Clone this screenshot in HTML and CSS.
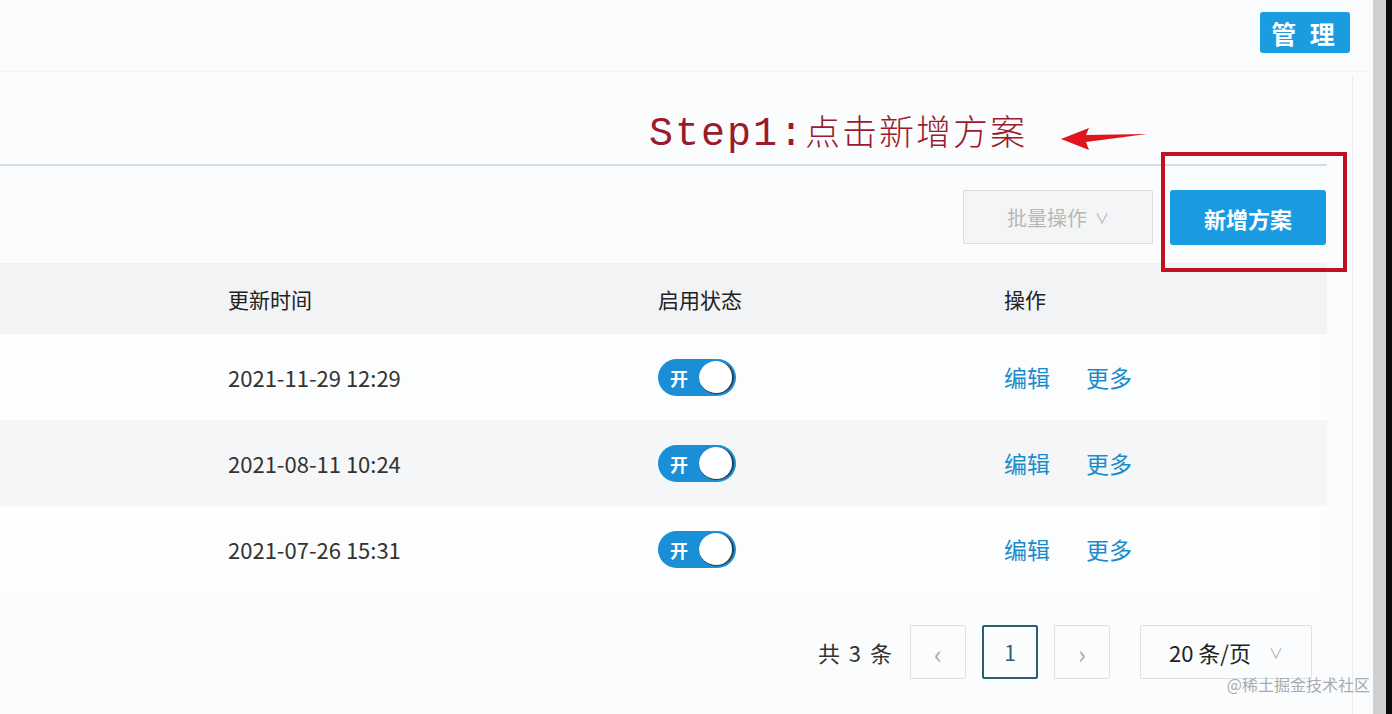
FILE: index.html
```html
<!DOCTYPE html>
<html lang="zh-CN">
<head>
    <meta charset="UTF-8">
    <title>方案列表</title>
    <link rel="stylesheet" href="styles.css">
</head>
<body>
<div class="screen">
    <div class="main">
        <div class="topbar">
            <button class="btn-manage">管 理</button>
        </div>

        <div class="panel">
            <div class="panel-head">
                <span class="step-tip"><span class="step-latin">Step1:</span><span class="step-cn">点击新增方案</span></span>
                <svg class="tip-arrow" width="88" height="26" viewBox="0 0 88 26">
                    <polygon points="0,14 28,3 25,10 86,9 25,17 28,25" fill="#e0141c"/>
                </svg>
            </div>

            <div class="toolbar">
                <div class="batch-select">批量操作 <span class="caret">&#8744;</span></div>
                <button class="btn-add">新增方案</button>
                <div class="highlight-box"></div>
            </div>

            <div class="grid-table">
                <div class="row head">
                    <div></div>
                    <div>更新时间</div>
                    <div>启用状态</div>
                    <div>操作</div>
                </div>
                <div class="row">
                    <div></div>
                    <div>2021-11-29 12:29</div>
                    <div><span class="switch"><span class="switch-text">开</span><span class="knob"></span></span></div>
                    <div class="actions"><a>编辑</a><a>更多</a></div>
                </div>
                <div class="row striped">
                    <div></div>
                    <div>2021-08-11 10:24</div>
                    <div><span class="switch"><span class="switch-text">开</span><span class="knob"></span></span></div>
                    <div class="actions"><a>编辑</a><a>更多</a></div>
                </div>
                <div class="row">
                    <div></div>
                    <div>2021-07-26 15:31</div>
                    <div><span class="switch"><span class="switch-text">开</span><span class="knob"></span></span></div>
                    <div class="actions"><a>编辑</a><a>更多</a></div>
                </div>
            </div>

            <div class="pager">
                <span class="total">共 3 条</span>
                <span class="page-btn arrow">&lsaquo;</span>
                <span class="page-btn current">1</span>
                <span class="page-btn arrow">&rsaquo;</span>
                <div class="size-select">20 条/页 <span class="caret">&#8744;</span></div>
            </div>
        </div>
        <span class="watermark">@稀土掘金技术社区</span>
    </div>
    <div class="scroll-track"></div>
    <div class="edge"></div>
</div>
</body>
</html>
```

FILE: styles.css
```css
body {
    margin: 0;
    font-family: "Noto Sans CJK SC", "Noto Sans", sans-serif;
    background-color: #f9fbfc;
    color: #333;
}

.screen {
    display: flex;
    width: 1392px;
    height: 714px;
    overflow: hidden;
}

.main {
    flex: 1;
    min-width: 0;
    position: relative;
}

.scroll-track {
    flex: none;
    width: 13px;
    background-color: #cfd0d1;
}

.edge {
    flex: none;
    width: 6px;
    background-color: #0a0a0a;
}

.topbar {
    height: 72px;
    display: flex;
    justify-content: flex-end;
    align-items: flex-start;
    padding-right: 23px;
    border-bottom: 1px solid #f3f5f6;
    box-sizing: border-box;
}

.btn-manage {
    margin-top: 12px;
    width: 90px;
    height: 41px;
    border: none;
    border-radius: 3px;
    background-color: #1b9be0;
    color: #fff;
    font-family: inherit;
    font-size: 25px;
    font-weight: 700;
    letter-spacing: 4px;
}

.panel {
    margin-top: 3px;
    width: 1353px;
    border-right: 1px solid #e9ebed;
    box-sizing: border-box;
    height: 639px;
    background-color: #fafcfd;
}

.panel-head {
    height: 91px;
    margin-right: 25px;
    border-bottom: 2px solid #d9dcdf;
    box-sizing: border-box;
    display: flex;
    justify-content: flex-end;
    align-items: center;
    padding-right: 178px;
    padding-top: 22px;
    gap: 34px;
}

.step-tip {
    color: #9b1a2c;
    white-space: nowrap;
}

.step-latin {
    font-family: "Liberation Mono", monospace;
    font-size: 40px;
    letter-spacing: 2px;
}

.step-cn {
    font-size: 35px;
    font-weight: 300;
    letter-spacing: 2px;
}

.tip-arrow {
    margin-top: 14px;
}

.toolbar {
    position: relative;
    height: 97px;
    display: flex;
    justify-content: flex-end;
    align-items: flex-start;
    padding: 24px 26px 0 0;
    box-sizing: border-box;
    gap: 17px;
}

.batch-select {
    width: 190px;
    height: 54px;
    box-sizing: border-box;
    border: 1px solid #dcdcdc;
    border-radius: 2px;
    background-color: #f4f5f6;
    color: #b8b8b8;
    font-size: 20px;
    display: flex;
    align-items: center;
    justify-content: center;
    gap: 8px;
}

.caret {
    font-size: 14px;
    color: #b0b0b0;
}

.btn-add {
    width: 156px;
    height: 55px;
    border: none;
    border-radius: 3px;
    background-color: #1a9be1;
    color: #fff;
    font-family: inherit;
    font-size: 22px;
    font-weight: 700;
}

.highlight-box {
    position: absolute;
    left: 1161px;
    top: -14px;
    width: 186px;
    height: 120px;
    border: 4px solid #c0121f;
    box-sizing: border-box;
}

.grid-table {
    width: 1327px;
}

.row {
    display: grid;
    grid-template-columns: 228px 430px 346px 1fr;
    height: 86px;
    align-items: center;
    font-size: 22px;
    color: #333;
    background-color: #fbfdfe;
}

.row.head {
    height: 71px;
    background-color: #f1f3f5;
    font-size: 21px;
    color: #222;
}

.row.striped {
    background-color: #f4f6f8;
}

.switch {
    display: inline-flex;
    align-items: center;
    width: 78px;
    height: 37px;
    border-radius: 19px;
    background-color: #1a8fd6;
    box-sizing: border-box;
    padding: 2px;
    vertical-align: middle;
}

.switch-text {
    color: #fff;
    font-size: 18px;
    font-weight: 700;
    width: 38px;
    text-align: center;
}

.knob {
    width: 35px;
    height: 33px;
    border-radius: 50%;
    background-color: #fff;
    box-sizing: border-box;
    border-right: 2px solid #2b3b48;
    border-bottom: 1px solid #2b3b48;
    margin-left: auto;
}

.actions {
    display: flex;
    gap: 36px;
}

.actions a {
    color: #1a8ccc;
    font-size: 23px;
}

.pager {
    display: flex;
    justify-content: flex-end;
    align-items: center;
    gap: 16px;
    padding: 33px 40px 0 0;
}

.total {
    font-size: 22px;
    color: #333;
    letter-spacing: 2px;
}

.page-btn {
    width: 56px;
    height: 54px;
    box-sizing: border-box;
    border: 1px solid #dfe1e3;
    border-radius: 2px;
    background-color: #fbfcfd;
    display: flex;
    align-items: center;
    justify-content: center;
    font-size: 20px;
    color: #aaa;
}

.page-btn.arrow {
    font-size: 26px;
}

.page-btn.current {
    border: 2px solid #2a5f6e;
    color: #2a6072;
    font-size: 21px;
}

.size-select {
    margin-left: 14px;
    width: 172px;
    height: 54px;
    box-sizing: border-box;
    border: 1px solid #dfe1e3;
    border-radius: 2px;
    display: flex;
    align-items: center;
    justify-content: center;
    gap: 18px;
    font-size: 22px;
    color: #222;
}

.watermark {
    position: absolute;
    right: 3px;
    bottom: 18px;
    font-size: 16px;
    color: #a9acae;
}
```
